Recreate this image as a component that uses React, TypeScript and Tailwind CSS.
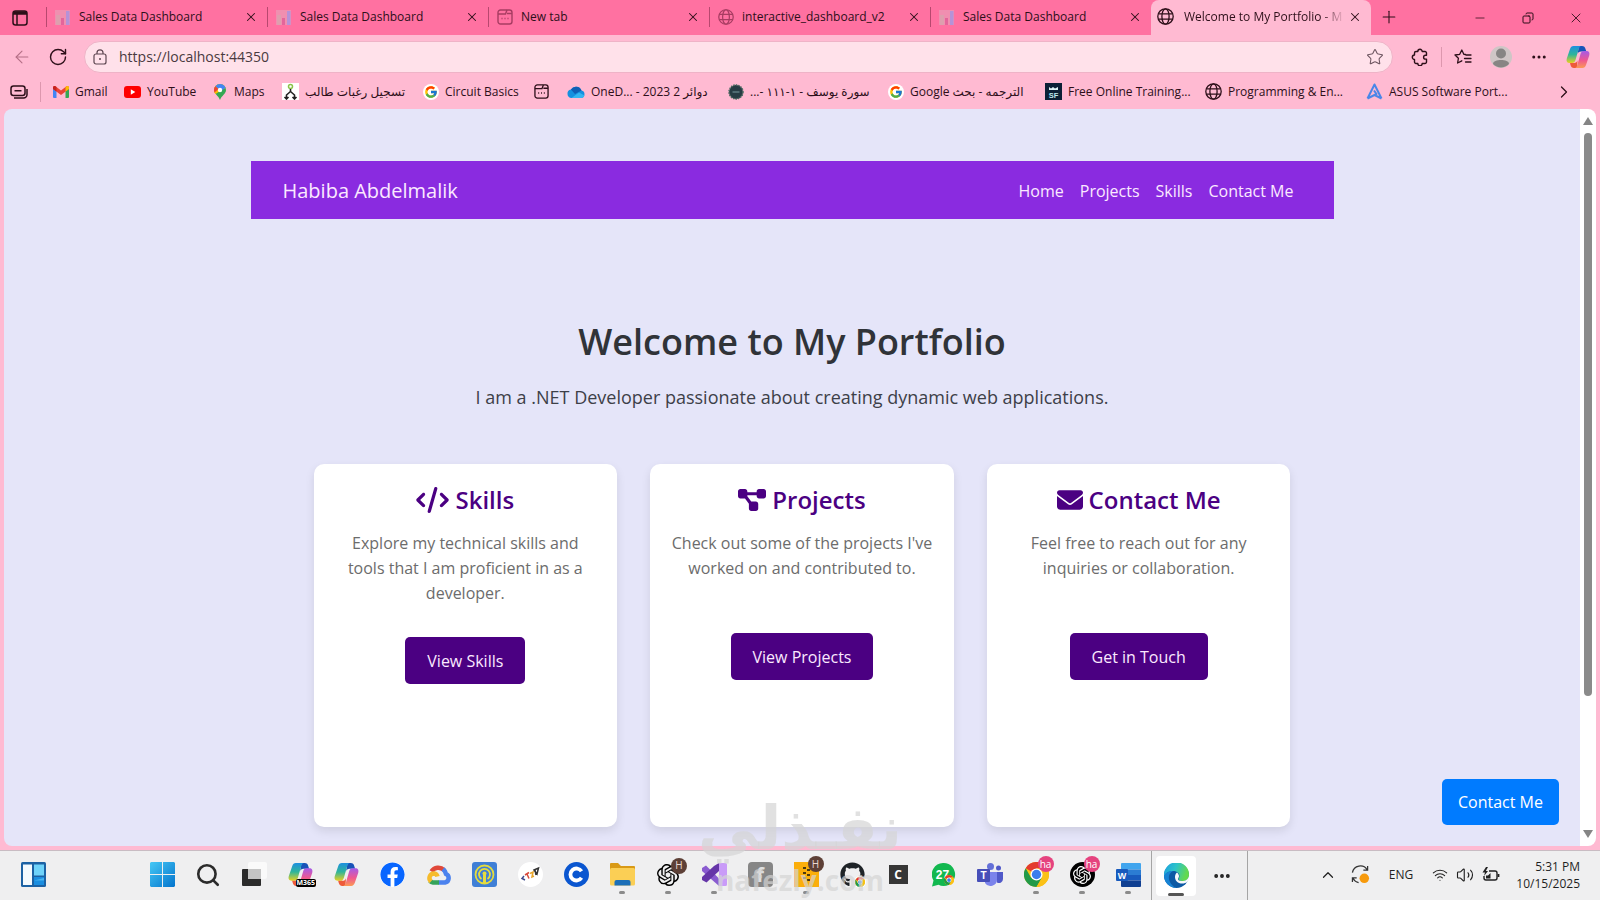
import React from "react";
import { FaFacebook, FaGithub } from "react-icons/fa";
import { FaCode, FaDiagramProject, FaEnvelope } from "react-icons/fa6";
import { FcGoogle } from "react-icons/fc";
import { SiOpenai } from "react-icons/si";
import {
  ArrowLeft,
  ChevronRight,
  ChevronUp,
  Copy,
  Ellipsis,
  Minus,
  Plus,
  RotateCw,
  Search,
  Star,
  Volume2,
  Wifi,
  X,
} from "lucide-react";

type IconProps = { className?: string };

const ChartIcon: React.FC<IconProps> = ({ className }) => (
  <svg viewBox="0 0 16 16" className={className}>
    <rect x="0" y="1" width="15" height="15" fill="#f08fb0" />
    <rect x="1" y="6" width="4" height="10" fill="#dd9fae" />
    <rect x="6" y="9" width="3" height="7" fill="#e4659b" />
    <rect x="11" y="2" width="3.500" height="14" fill="#b592d8" />
  </svg>
);

const GlobeIcon: React.FC<IconProps> = ({ className }) => (
  <svg viewBox="0 0 17 17" fill="none" stroke="currentColor" strokeWidth="1.300" className={className}>
    <circle cx="8.500" cy="8.500" r="7.700" />
    <ellipse cx="8.500" cy="8.500" rx="3.600" ry="7.700" />
    <path d="M1.500 5.800h14M1.500 11.200h14" />
  </svg>
);

const PageIcon: React.FC<IconProps> = ({ className }) => (
  <svg viewBox="0 0 16 16" fill="none" stroke="currentColor" strokeWidth="1.400" className={className}>
    <rect x="1" y="1" width="14" height="14" rx="2.500" />
    <path d="M1 5h7.500l1.500-4M10 4.500h5" />
    <path d="M4.500 9.500h1M7.500 9.500h1M10.500 9.500h1" strokeWidth="1.600" />
  </svg>
);

const PuzzleIcon: React.FC<IconProps> = ({ className }) => (
  <svg viewBox="0 0 18 18" fill="none" stroke="currentColor" strokeWidth="1.400" strokeLinejoin="round" className={className}>
    <path d="M6.800 3.500a2.200 2.200 0 0 1 4.400 0H14a1.500 1.500 0 0 1 1.500 1.500v2.300h-1a1.900 1.900 0 0 0 0 3.800h1V14a1.500 1.500 0 0 1-1.500 1.500h-2.800a2.200 2.200 0 0 1-4.400 0H5A1.500 1.500 0 0 1 3.500 14v-2.600a2.200 2.200 0 0 1 0-4.400V5A1.500 1.500 0 0 1 5 3.500z" />
  </svg>
);

const CopilotIcon: React.FC<IconProps> = ({ className }) => (
  <svg viewBox="0 0 24 24" className={className}>
    <defs>
      <linearGradient id="cpBlue" x1="0" y1="0" x2="0" y2="1">
        <stop offset="0" stopColor="#1d8fe0" />
        <stop offset=".5" stopColor="#2fb59a" />
        <stop offset="1" stopColor="#e8d020" />
      </linearGradient>
      <linearGradient id="cpPink" x1="0" y1="0" x2="0" y2="1">
        <stop offset="0" stopColor="#a55be8" />
        <stop offset=".55" stopColor="#f0588f" />
        <stop offset="1" stopColor="#fb9a55" />
      </linearGradient>
    </defs>
    <path d="M13 1h3c2 0 3 1 3.500 3l.8 2.500H15c-2 0-3 1-3.500 2.500z" fill="#1853b8" />
    <path d="M7.500 1H15c-1.500.5-2 2-2.500 3.500L9.500 15c-.6 2-1.600 3-3.500 3H3.500C1 18 0 16 .8 13.500L4 4c.7-2 1.700-3 3.500-3z" fill="url(#cpBlue)" />
    <path d="M11 23H8c-2 0-3-1-3.500-3L4 18h4c2 0 3-1 3.500-2.500z" fill="#ee5a3a" />
    <path d="M16.500 23H9c1.500-.5 2-2 2.500-3.500L14.500 9c.6-2 1.600-3 3.500-3h2.500c2.500 0 3.500 2 2.700 4.500L20 20c-.7 2-1.700 3-3.500 3z" fill="url(#cpPink)" />
  </svg>
);

const ChromeIcon: React.FC<IconProps> = ({ className }) => (
  <svg viewBox="0 0 24 24" className={className}>
    <circle cx="12" cy="12" r="12" fill="#fbc116" />
    <path d="M12 12L1.600 6A12 12 0 0 1 22.400 6H12z" fill="#e33b2e" />
    <path d="M1.600 6A12 12 0 0 0 12 24l5.200-9L12 12 6.800 15z" fill="#229a48" />
    <path d="M22.400 6A12 12 0 0 1 12 24l5.200-9L16 6z" fill="#fbc116" />
    <circle cx="12" cy="12" r="5.800" fill="#fff" />
    <circle cx="12" cy="12" r="4.500" fill="#3b7ded" />
  </svg>
);

const GmailIcon: React.FC<IconProps> = ({ className }) => (
  <svg viewBox="0 0 16 12" className={className}>
    <path d="M0 1.500V11a1 1 0 0 0 1 1h2.500V4z" fill="#4285f4" />
    <path d="M16 1.500V11a1 1 0 0 1-1 1h-2.500V4z" fill="#34a853" />
    <path d="M0 1.500C0 0 1.800-.5 2.800.4L8 4.500 13.200.4C14.200-.5 16 0 16 1.500V3L8 9 0 3z" fill="#ea4335" />
    <path d="M12.500 1l.7-.6C14.200-.5 16 0 16 1.500V3l-3.500 2.600z" fill="#fbbc04" />
    <path d="M0 1.500C0 0 1.800-.5 2.800.4l.7.6v4.600L0 3z" fill="#c5221f" />
  </svg>
);

const YoutubeIcon: React.FC<IconProps> = ({ className }) => (
  <svg viewBox="0 0 17 12" className={className}>
    <rect width="17" height="12" rx="3" fill="#f00" />
    <path d="M6.800 3.300v5.400L11.300 6z" fill="#fff" />
  </svg>
);

const MapsIcon: React.FC<IconProps> = ({ className }) => (
  <svg viewBox="0 0 12 16" className={className}>
    <path d="M6 0a6 6 0 0 1 6 6c0 4-4.500 5.500-6 10C4.500 11.500 0 10 0 6a6 6 0 0 1 6-6z" fill="#34a853" />
    <path d="M6 0a6 6 0 0 1 5.600 3.800L1.500 10C.6 9 0 7.800 0 6a6 6 0 0 1 6-6z" fill="#fbbc04" />
    <path d="M6 0a6 6 0 0 1 5.600 3.800L7 7 1.400 2.200A6 6 0 0 1 6 0z" fill="#4285f4" />
    <path d="M1.400 2.200L4.500 5 .6 8.500A6 6 0 0 1 1.400 2.200z" fill="#ea4335" />
    <circle cx="6" cy="6" r="2.200" fill="#fff" />
  </svg>
);

const TreeIcon: React.FC<IconProps> = ({ className }) => (
  <svg viewBox="0 0 17 17" className={className}>
    <rect width="17" height="17" fill="#fff" />
    <circle cx="8.500" cy="3.500" r="2" fill="none" stroke="#8bc34a" strokeWidth="1.500" />
    <path d="M8.500 6v3M8.500 8.500L4.500 12v3M8.500 8.500l4 3.500v3M2.500 14l2 2 2-2M10.500 14l2 2 2-2" fill="none" stroke="#222" strokeWidth="1.600" />
  </svg>
);

const GoogleTile: React.FC<IconProps> = ({ className }) => (
  <span className={`flex items-center justify-center rounded-full bg-white ${className}`}>
    <FcGoogle className="size-3.5" />
  </span>
);

const CloudIcon: React.FC<IconProps> = ({ className }) => (
  <svg viewBox="0 0 18 12" className={className}>
    <path d="M4.500 12a4.300 4.300 0 0 1-.6-8.500A6 6 0 0 1 14.500 4.500 3.800 3.800 0 0 1 14 12z" fill="#1490df" />
    <path d="M3.900 3.500A6 6 0 0 1 14.500 4.500L8 8z" fill="#0f5fb5" />
    <path d="M4.500 12L12 6.500l5.500 3A3.500 3.500 0 0 1 14 12z" fill="#33b5f1" />
  </svg>
);

const SealIcon: React.FC<IconProps> = ({ className }) => (
  <svg viewBox="0 0 16 16" className={className}>
    <circle cx="8" cy="8" r="7" fill="#263c44" stroke="#4a6a60" strokeWidth="1.500" strokeDasharray="1.500 1" />
    <path d="M4.500 8h7" stroke="#5d7a80" strokeWidth="1.500" />
  </svg>
);

const SfIcon: React.FC<IconProps> = ({ className }) => (
  <svg viewBox="0 0 17 17" className={className}>
    <rect width="17" height="17" fill="#0c2036" />
    <path d="M4 7V4l2 1.500L8 4l2 1.500L13 4v3z" fill="#dff3f5" />
    <text x="8.500" y="15" fontSize="7.500" fontWeight="700" textAnchor="middle" fill="#bfe9ee" fontFamily="Liberation Sans, sans-serif">SF</text>
  </svg>
);

const AsusIcon: React.FC<IconProps> = ({ className }) => (
  <svg viewBox="0 0 17 17" fill="none" stroke="#4a86e8" strokeWidth="2" strokeLinejoin="round" className={className}>
    <path d="M1.500 15.500L8.500 1.500l7 14M1.500 15.500l9-4.500-2.500-3.500M8.500 12l7 3.500" />
  </svg>
);

const SidebarIcon: React.FC<IconProps> = ({ className }) => (
  <svg viewBox="0 0 18 14" fill="none" stroke="currentColor" strokeWidth="1.500" className={className}>
    <rect x="1" y="1" width="14" height="9.500" rx="2.500" />
    <path d="M4.500 5.800h7M4 13h9.500a3.500 3.500 0 0 0 3.500-3.500V4" />
  </svg>
);

const WorkspaceIcon: React.FC<IconProps> = ({ className }) => (
  <svg viewBox="0 0 16 16" fill="none" stroke="#2d0f19" strokeWidth="1.500" className={className}>
    <rect x="1" y="1" width="14" height="14" rx="2.500" />
    <path d="M1 3h14" strokeWidth="3.500" />
    <path d="M5 4v11" />
  </svg>
);

const LockIcon: React.FC<IconProps> = ({ className }) => (
  <svg viewBox="0 0 14 16" fill="none" stroke="currentColor" strokeWidth="1.200" className={className}>
    <rect x="1" y="5" width="12" height="10" rx="2" />
    <path d="M4 5V3.800a3 3 0 0 1 6 0V5" />
    <circle cx="7" cy="10" r="1" fill="currentColor" stroke="none" />
  </svg>
);

const FavoritesIcon: React.FC<IconProps> = ({ className }) => (
  <svg viewBox="0 0 18 16" fill="none" stroke="currentColor" strokeWidth="1.300" strokeLinejoin="round" strokeLinecap="round" className={className}>
    <path d="M11.500 5.500L9.800 5.300 7.800 1 5.700 5.300 1 6l3.400 3.300L3.600 14l4.200-2.200" />
    <path d="M12 6h5M10.500 9.500H17M11.500 13H17" />
  </svg>
);

const WidgetsIcon: React.FC<IconProps> = ({ className }) => (
  <svg viewBox="0 0 25 25" className={className}>
    <rect width="25" height="25" rx="1.500" fill="#1c62a4" />
    <rect x="2" y="2.500" width="9" height="20.500" fill="#f4fafe" />
    <rect x="13" y="2.500" width="10" height="11" fill="#6fd3fa" />
    <path d="M13 15h10v8H13z" fill="#1b8ee0" />
    <path d="M13 18.500L23 16v2.500z" fill="#45b4f2" />
  </svg>
);

const WindowsIcon: React.FC<IconProps> = ({ className }) => (
  <svg viewBox="0 0 25 25" className={className}>
    <defs>
      <linearGradient id="win" x1="0" y1="0" x2="1" y2="1">
        <stop offset="0" stopColor="#45c8f5" />
        <stop offset="1" stopColor="#0474cd" />
      </linearGradient>
    </defs>
    <path d="M1 0h11v12H0V1zM13 0h11l1 1v11H13zM0 13h12v12H1l-1-1zM13 13h12v11l-1 1H13z" fill="url(#win)" />
  </svg>
);

const TaskViewIcon: React.FC<IconProps> = ({ className }) => (
  <svg viewBox="0 0 26 25" className={className}>
    <rect x="7" y="0" width="19" height="17" rx="2" fill="#fafafa" />
    <rect x="1" y="7" width="19" height="17" rx="1" fill="#2b2b2b" />
    <rect x="7" y="7" width="13" height="10" fill="#c4c4c4" />
  </svg>
);

const GoogleCloudIcon: React.FC<IconProps> = ({ className }) => (
  <svg viewBox="0 0 25 21" fill="none" strokeWidth="4.500" className={className}>
    <path d="M5.500 7.500A8 8 0 0 1 18 6" stroke="#e0483a" />
    <path d="M17 5a9 9 0 0 1 3 5 4.500 4.500 0 0 1-1 8.500h-6.500" stroke="#4b82ee" />
    <path d="M13 18.500H7a4.500 4.500 0 0 1-3-1.500" stroke="#35a35a" />
    <path d="M5 17.500A4.600 4.600 0 0 1 7.500 9.500c2 0 3.500 1 4 3" stroke="#f6bb2c" />
  </svg>
);

const PodcastIcon: React.FC<IconProps> = ({ className }) => (
  <svg viewBox="0 0 25 25" fill="none" stroke="#e4dc3f" strokeWidth="1.800" className={className}>
    <rect width="25" height="25" rx="3" fill="#3f7fd6" stroke="none" />
    <circle cx="12.500" cy="12.500" r="9" />
    <path d="M9.500 17a5.500 5.500 0 1 1 6 0" />
    <path d="M12.500 12v9" strokeWidth="3" />
    <circle cx="12.500" cy="11.500" r="2" fill="#e4dc3f" stroke="none" />
  </svg>
);

const TopIcon: React.FC<IconProps> = ({ className }) => (
  <svg viewBox="0 0 25 25" fill="none" strokeWidth="1.500" className={className}>
    <circle cx="12.500" cy="12.500" r="12.500" fill="#fff" />
    <path d="M6 14l-2 2.500 3 1.500" stroke="#3e4a8c" />
    <path d="M7 13l4-2.500M9 12l2 4.500" stroke="#d84a3c" />
    <path d="M12 11.500l3-1.500-1 5 2-1" stroke="#e8a52c" />
    <path d="M16 8l4.500-2-1.500 6zM17 8l1 5" stroke="#333" />
  </svg>
);

const CourseraIcon: React.FC<IconProps> = ({ className }) => (
  <svg viewBox="0 0 25 25" className={className}>
    <circle cx="12.500" cy="12.500" r="12.500" fill="#0a56d0" />
    <path d="M17.500 9.300a6 6 0 1 0 0 6.400" fill="none" stroke="#fff" strokeWidth="3.800" />
  </svg>
);

const FolderIcon: React.FC<IconProps> = ({ className }) => (
  <svg viewBox="0 0 25 23" className={className}>
    <path d="M0 1a1 1 0 0 1 1-1h7l3 3h13a1 1 0 0 1 1 1v8H0z" fill="#d99a16" />
    <rect y="5" width="25" height="17.500" rx="1.500" fill="#fbcf55" />
    <path d="M4.500 22.500V19a2 2 0 0 1 2-2h12a2 2 0 0 1 2 2v3.500z" fill="#1c6fb8" />
  </svg>
);

const VisualStudioIcon: React.FC<IconProps> = ({ className }) => (
  <svg viewBox="0 0 25 25" className={className}>
    <path d="M17 1h6.500a1.500 1.500 0 0 1 1.500 1.500v20a1.500 1.500 0 0 1-1.500 1.500H17z" fill="#c99bf8" />
    <path d="M0 6l4-2.500 13 13V24L0 9z" fill="#8a5bd0" />
    <path d="M17 1v8L4.500 20.500 0 18v-3L12 4z" fill="#6535a8" />
  </svg>
);

const ArchiveIcon: React.FC<IconProps> = ({ className }) => (
  <svg viewBox="0 0 25 25" className={className}>
    <rect width="25" height="25" fill="#fbae0b" />
    <path d="M9 6h3M13 8h3M9 11h3M13 13h3M9 16h3M13 18h3" stroke="#4a3a12" strokeWidth="2" />
  </svg>
);

const WhatsappIcon: React.FC<IconProps> = ({ className }) => (
  <svg viewBox="0 0 24 24" className={className}>
    <path d="M11.500 0a11.500 11.500 0 1 1-5 21.800L0 23.500l1.500-6A11.500 11.500 0 0 1 11.500 0z" fill="#12b84f" />
    <text x="10.500" y="16" fontSize="12" fontWeight="700" textAnchor="middle" fill="#fff" fontFamily="Liberation Sans, sans-serif">27</text>
  </svg>
);

const TeamsIcon: React.FC<IconProps> = ({ className }) => (
  <svg viewBox="0 0 26 24" className={className}>
    <circle cx="13.500" cy="3.500" r="3.500" fill="#6470d8" />
    <circle cx="21.500" cy="5" r="2.500" fill="#5059c9" />
    <path d="M18 9h8v7a4 4 0 0 1-6 3.500z" fill="#5059c9" />
    <path d="M8 9h12v7.500a6.500 6.500 0 0 1-12 3.500z" fill="#7b83eb" />
    <rect y="6" width="13" height="13" rx="1" fill="#464eb8" />
    <text x="6.500" y="16" fontSize="10" fontWeight="700" textAnchor="middle" fill="#fff" fontFamily="Liberation Sans, sans-serif">T</text>
  </svg>
);

const WordIcon: React.FC<IconProps> = ({ className }) => (
  <svg viewBox="0 0 25 24" className={className}>
    <path d="M5 1a1 1 0 0 1 1-1h18a1 1 0 0 1 1 1v5.500H5z" fill="#41a5ee" />
    <path d="M5 6.500h20V12H5z" fill="#2b7cd3" />
    <path d="M5 12h20v5.500H5z" fill="#185abd" />
    <path d="M5 17.500h20V23a1 1 0 0 1-1 1H6a1 1 0 0 1-1-1z" fill="#103f91" />
    <rect y="6" width="12" height="12" rx="1" fill="#185abd" />
    <text x="6" y="15.500" fontSize="9" fontWeight="700" textAnchor="middle" fill="#fff" fontFamily="Liberation Sans, sans-serif">W</text>
  </svg>
);

const EdgeIcon: React.FC<IconProps> = ({ className }) => (
  <svg viewBox="0 0 25 25" className={className}>
    <defs>
      <linearGradient id="edgeTop" x1="0" y1="0" x2="1" y2="0.300">
        <stop offset="0" stopColor="#1b9de2" />
        <stop offset=".5" stopColor="#2dc3c9" />
        <stop offset="1" stopColor="#63d94d" />
      </linearGradient>
    </defs>
    <circle cx="12.500" cy="12.500" r="12.500" fill="#0c59a4" />
    <path d="M0 11.500A12.500 12.500 0 0 1 25 12c0 4-3 6-6.500 6-2.500 0-4-.8-4-2 0-.8 1-1.200 1-3C15.500 10.500 13 8 9.500 8 5 8 1 10 0 14z" fill="url(#edgeTop)" />
    <path d="M0 13C1 10 5 8 9 8c-4 2-5 6-3.500 10 1 3 4 6 7 7A12.500 12.500 0 0 1 0 13z" fill="#1783d4" />
    <path d="M12 10.500c-2 3-1 8 3 9.500 3 1.200 6.500.5 8.800-1.500l1.200-1V13c-1 4-4 5-7 5s-4-.8-4-2c0-.8 1-1.200 1-3 0-1-.8-2.500-2-3.500z" fill="#f7f9fa" />
  </svg>
);

const SyncIcon: React.FC<IconProps> = ({ className }) => (
  <svg viewBox="0 0 20 20" fill="none" stroke="#333" strokeWidth="1.300" className={className}>
    <path d="M1.500 8A8.500 8.500 0 0 1 17 5M17.500 1v4.500H13M6 13.500H1.500V18M2 14a8.500 8.500 0 0 0 6 4.500" />
    <circle cx="14" cy="14" r="5" fill="#f79a0c" stroke="none" />
  </svg>
);

const BatteryIcon: React.FC<IconProps> = ({ className }) => (
  <svg viewBox="0 0 18 16" fill="none" stroke="#222" strokeWidth="1.400" className={className}>
    <path d="M7 4h6a2 2 0 0 1 2 2v5a2 2 0 0 1-2 2H4a2 2 0 0 1-2-2V9" />
    <path d="M16.500 7v3" strokeWidth="1.800" />
    <path d="M4 8.500h2L8.500 6v5.500H4z" fill="#222" stroke="none" />
    <path d="M4 0L.5 5.500H3L2 9l4-5H3.800L6 0z" fill="#222" stroke="none" />
  </svg>
);

const LetterTile: React.FC<{ letter: string; className: string }> = ({ letter, className }) => (
  <span className={`flex items-center justify-center font-bold ${className}`}>{letter}</span>
);

const tabs = [
  { title: "Sales Data Dashboard", icon: ChartIcon },
  { title: "Sales Data Dashboard", icon: ChartIcon },
  { title: "New tab", icon: PageIcon },
  { title: "interactive_dashboard_v2", icon: GlobeIcon },
  { title: "Sales Data Dashboard", icon: ChartIcon },
];

const TabStrip: React.FC = () => (
  <div className="flex h-[35px] items-stretch bg-[#ff71a1]">
    <button aria-label="Workspaces" className="flex w-[46px] shrink-0 items-center pl-3">
      <WorkspaceIcon className="size-4" />
    </button>
    {tabs.map(({ title, icon: Icon }, i) => (
      <div key={i} className="flex w-[221px] items-center pb-0.5">
        <span className="h-5 w-px shrink-0 bg-[#b8486f]" />
        <Icon className="ml-2 size-4 shrink-0 text-[#a83c62]" />
        <span className="ml-2 flex-1 truncate text-xs">{title}</span>
        <button aria-label="Close tab" className="mr-1.5 flex size-5 shrink-0 items-center justify-center">
          <X className="size-3.5" strokeWidth={1.8} />
        </button>
      </div>
    ))}
    <div className="flex w-[220px] items-center rounded-t-lg bg-[#ffbad2] pb-0.5">
      <GlobeIcon className="ml-1.5 size-[17px] shrink-0" />
      <span className="ml-2.5 flex-1 overflow-hidden bg-linear-to-r from-[#2d0f19] from-85% to-transparent bg-clip-text text-xs whitespace-nowrap text-transparent">
        Welcome to My Portfolio - M
      </span>
      <button aria-label="Close tab" className="mr-1.5 flex size-5 shrink-0 items-center justify-center">
        <X className="size-3.5" strokeWidth={1.8} />
      </button>
    </div>
    <button aria-label="New tab" className="flex w-9 items-center justify-center pb-0.5">
      <Plus className="size-5" strokeWidth={1.3} />
    </button>
    <div className="ml-auto flex">
      <button aria-label="Minimize" className="flex w-12 items-center justify-center">
        <Minus className="size-3.5" strokeWidth={1.3} />
      </button>
      <button aria-label="Restore" className="flex w-12 items-center justify-center">
        <Copy className="size-3 -scale-x-100" strokeWidth={2} />
      </button>
      <button aria-label="Close" className="flex w-12 items-center justify-center">
        <X className="size-4" strokeWidth={1.3} />
      </button>
    </div>
  </div>
);

const AddressBar: React.FC = () => (
  <div className="flex h-[43px] items-center">
    <button aria-label="Back" className="ml-3 text-[#b56f86]">
      <ArrowLeft className="size-5" strokeWidth={1.3} />
    </button>
    <button aria-label="Reload" className="mx-4">
      <RotateCw className="size-5" strokeWidth={1.7} />
    </button>
    <label className="flex h-8 flex-1 items-center rounded-full border border-[#efb3c7] bg-[#ffe1ea] px-2">
      <LockIcon className="h-4 w-3.5 text-[#5d4650]" />
      <input
        type="text"
        aria-label="Address"
        defaultValue="https://localhost:44350"
        className="ml-3 flex-1 bg-transparent text-sm text-[#4a3a40] outline-none"
      />
      <Star className="size-[18px] text-[#6d5560]" strokeWidth={1.4} />
    </label>
    <button aria-label="Extensions" className="ml-[18px]">
      <PuzzleIcon className="size-[18px]" />
    </button>
    <span className="mx-3 h-5 w-px bg-[#dd97ae]" />
    <button aria-label="Favorites">
      <FavoritesIcon className="h-4 w-[18px]" />
    </button>
    <button aria-label="Profile" className="ml-[18px]">
      <svg viewBox="0 0 22 22" className="size-[22px]">
        <circle cx="11" cy="11" r="11" fill="#cfc6c6" />
        <circle cx="11" cy="7.500" r="5" fill="#878584" />
        <path d="M3 18c0-3 4-4 8-4s8 1 8 4a11 11 0 0 1-16 0z" fill="#878584" />
      </svg>
    </button>
    <button aria-label="Settings and more" className="mx-[18px]">
      <Ellipsis className="size-[18px]" />
    </button>
    <button aria-label="Copilot" className="mr-2.5">
      <CopilotIcon className="size-6" />
    </button>
  </div>
);

const bookmarks = [
  { label: "Gmail", icon: GmailIcon, size: "w-4 h-3", width: "w-[71px]" },
  { label: "YouTube", icon: YoutubeIcon, size: "w-[17px] h-3", width: "w-[88px]" },
  { label: "Maps", icon: MapsIcon, size: "w-4 h-4", width: "w-[70px]" },
  { label: "تسجيل رغبات طالب", icon: TreeIcon, size: "size-[17px]", width: "w-[141px]" },
  { label: "Circuit Basics", icon: GoogleTile, size: "size-4", width: "w-[111px]" },
  { label: "", icon: PageIcon, size: "size-[15px]", width: "w-[33px]" },
  { label: "OneD... - 2023 2 دوائر", icon: CloudIcon, size: "w-[18px] h-3", width: "w-[161px]" },
  { label: "سورة يوسف - ١-١١١ -...", icon: SealIcon, size: "size-4", width: "w-[160px]" },
  { label: "الترجمه - بحث Google", icon: GoogleTile, size: "size-4", width: "w-[157px]" },
  { label: "Free Online Training...", icon: SfIcon, size: "size-[17px]", width: "w-[160px]" },
  { label: "Programming & En...", icon: GlobeIcon, size: "size-[17px]", width: "w-[161px]" },
  { label: "ASUS Software Port...", icon: AsusIcon, size: "size-[17px]", width: "w-[150px]" },
];

const Bookmarks: React.FC = () => (
  <nav className="flex h-[31px] items-center pb-1">
    <button aria-label="Collections" className="ml-2.5">
      <SidebarIcon className="h-3.5 w-[18px]" />
    </button>
    <span className="mx-3 h-5 w-px shrink-0 bg-[#dd97ae]" />
    {bookmarks.map(({ label, icon: Icon, size, width }, i) => (
      <a key={i} href="#" aria-label={label || "Page"} className={`flex shrink-0 items-center ${width}`}>
        <Icon className={`shrink-0 ${size}`} />
        <span dir="auto" className="ml-1.5 text-xs whitespace-nowrap">
          {label}
        </span>
      </a>
    ))}
    <button aria-label="More bookmarks" className="mr-[26px] ml-auto">
      <ChevronRight className="size-5" strokeWidth={1.5} />
    </button>
  </nav>
);

const cards = [
  {
    title: "Skills",
    icon: FaCode,
    iconSize: "h-[26px] w-[33px]",
    text: "Explore my technical skills and tools that I am proficient in as a developer.",
    action: "View Skills",
    spacing: "mt-[31px]",
  },
  {
    title: "Projects",
    icon: FaDiagramProject,
    iconSize: "h-[26px] w-7",
    text: "Check out some of the projects I've worked on and contributed to.",
    action: "View Projects",
    spacing: "mt-[52px]",
  },
  {
    title: "Contact Me",
    icon: FaEnvelope,
    iconSize: "size-[26px]",
    text: "Feel free to reach out for any inquiries or collaboration.",
    action: "Get in Touch",
    spacing: "mt-[52px]",
  },
];

const Portfolio: React.FC = () => (
  <main className="min-w-0 flex-1 overflow-hidden bg-[#e5e5f9]">
    <div className="mx-auto mt-[52px] max-w-[1083px]">
      <header className="flex h-[58px] items-center justify-between bg-[#8a2be0] pt-0.5 pr-10 pl-8 text-[#fbe9ff]">
        <a href="#" className="text-xl">
          Habiba Abdelmalik
        </a>
        <nav className="flex gap-4 text-base">
          <a href="#">Home</a>
          <a href="#">Projects</a>
          <a href="#">Skills</a>
          <a href="#">Contact Me</a>
        </nav>
      </header>
      <h1 className="mt-[98px] text-center text-4xl leading-[50px] font-semibold text-[#303338]">
        Welcome to My Portfolio
      </h1>
      <p className="mt-4 text-center text-lg leading-7 text-[#3d4048]">
        I am a .NET Developer passionate about creating dynamic web applications.
      </p>
      <section className="mt-[53px] mr-[43px] ml-[63px] grid grid-cols-3 gap-[33px]">
        {cards.map(({ title, icon: Icon, iconSize, text, action, spacing }) => (
          <article
            key={title}
            className="flex h-[363px] flex-col items-center rounded-[10px] bg-white px-5 pt-5 text-center shadow-[0_4px_10px_rgba(0,0,0,0.1)]"
          >
            <h2 className="flex items-center gap-1.5 text-2xl leading-8 font-semibold text-[#4b0082]">
              <Icon className={iconSize} />
              {title}
            </h2>
            <p className="mt-[15px] text-base leading-[25px] text-[#6c6c6c]">{text}</p>
            <button className={`h-[47px] rounded-[5px] bg-[#4b0082] px-[22px] text-base text-[#fbe9ff] ${spacing}`}>
              {action}
            </button>
          </article>
        ))}
      </section>
    </div>
  </main>
);

const Scrollbar: React.FC = () => (
  <div className="flex w-4 shrink-0 flex-col items-center justify-between bg-white py-2">
    <svg viewBox="0 0 10 8" className="h-2 w-2.5">
      <path d="M5 0l5 8H0z" fill="#858585" />
    </svg>
    <span className="mt-2 h-[563px] w-2 rounded-full bg-[#8a8a8a]" />
    <span className="flex-1" />
    <svg viewBox="0 0 10 8" className="h-2 w-2.5">
      <path d="M5 8l5-8H0z" fill="#858585" />
    </svg>
  </div>
);

const Badge: React.FC<{ text: string; className: string }> = ({ text, className }) => (
  <span
    className={`absolute -top-1.5 left-3.5 flex size-4 items-center justify-center rounded-full text-[10px] ${className}`}
  >
    {text}
  </span>
);

const apps = [
  { name: "Start", open: false, icon: <WindowsIcon className="size-[25px]" /> },
  { name: "Search", open: false, icon: <Search className="size-[26px] text-[#2b2b2b]" strokeWidth={2.4} /> },
  { name: "Task view", open: false, icon: <TaskViewIcon className="h-[25px] w-[26px]" /> },
  {
    name: "Microsoft 365",
    open: false,
    icon: (
      <>
        <CopilotIcon className="size-[25px]" />
        <span className="absolute bottom-0 left-2 rounded-xs bg-black px-px text-[7px] leading-2 font-bold text-white">
          M365
        </span>
      </>
    ),
  },
  { name: "Copilot", open: false, icon: <CopilotIcon className="size-[25px]" /> },
  { name: "Facebook", open: false, icon: <FaFacebook className="size-[25px] rounded-full bg-white text-[#0866ff]" /> },
  { name: "Google Cloud", open: false, icon: <GoogleCloudIcon className="h-[21px] w-[25px]" /> },
  { name: "Podcasts", open: false, icon: <PodcastIcon className="size-[25px]" /> },
  { name: "Top", open: false, icon: <TopIcon className="size-[25px]" /> },
  { name: "Coursera", open: false, icon: <CourseraIcon className="size-[25px]" /> },
  { name: "File Explorer", open: true, icon: <FolderIcon className="h-[23px] w-[25px]" /> },
  {
    name: "ChatGPT",
    open: true,
    icon: (
      <>
        <SiOpenai className="size-[22px] text-black" />
        <Badge text="H" className="bg-[#5d4037] text-[#e8d8d2]" />
      </>
    ),
  },
  { name: "Visual Studio", open: true, icon: <VisualStudioIcon className="size-[25px]" /> },
  { name: "Feed", open: false, icon: <LetterTile letter="f" className="size-[25px] rounded bg-[#868686] text-xl text-[#dedede]" /> },
  {
    name: "Archive",
    open: true,
    icon: (
      <>
        <ArchiveIcon className="size-[25px]" />
        <Badge text="H" className="bg-[#5d4037] text-[#e8d8d2]" />
      </>
    ),
  },
  {
    name: "GitHub",
    open: false,
    icon: (
      <>
        <FaGithub className="size-[25px] text-[#1e2327]" />
        <span className="absolute top-3.5 left-3.5 rounded-full bg-white p-px">
          <ChromeIcon className="size-2.5" />
        </span>
      </>
    ),
  },
  { name: "Console", open: false, icon: <LetterTile letter="C" className="size-[19px] bg-[#363636] text-xs text-white" /> },
  {
    name: "WhatsApp",
    open: false,
    icon: (
      <>
        <WhatsappIcon className="size-6" />
        <ChromeIcon className="absolute top-3 left-3 size-2.5" />
      </>
    ),
  },
  { name: "Teams", open: false, icon: <TeamsIcon className="h-6 w-[26px]" /> },
  {
    name: "Chrome",
    open: true,
    icon: (
      <>
        <ChromeIcon className="size-[25px]" />
        <Badge text="ha" className="bg-[#e5437f] text-white" />
      </>
    ),
  },
  {
    name: "ChatGPT app",
    open: true,
    icon: (
      <>
        <span className="flex size-[25px] items-center justify-center rounded-full bg-black">
          <SiOpenai className="size-[18px] text-white" />
        </span>
        <Badge text="ha" className="bg-[#e5437f] text-white" />
      </>
    ),
  },
  { name: "Word", open: true, icon: <WordIcon className="h-6 w-[25px]" /> },
];

const Taskbar: React.FC = () => (
  <footer className="flex h-[50px] items-center border-t border-[#c9bcc3] bg-[#efeff0] text-[#1f1f1f]">
    <button aria-label="Widgets" className="ml-[21px] pb-0.5">
      <WidgetsIcon className="size-[25px]" />
    </button>
    <div className="ml-[93px] flex">
      {apps.map(({ name, open, icon }) => (
        <button key={name} aria-label={name} className="relative flex h-[49px] w-[46px] items-center justify-center pb-0.5">
          <span className="relative">{icon}</span>
          {open && <span className="absolute bottom-1.5 h-[3px] w-1.5 rounded-full bg-[#8b8b8b]" />}
        </button>
      ))}
    </div>
    <div className="flex h-full w-[97px] items-center border-x border-[#a5a5a5] pl-1">
      <button aria-label="Edge" className="relative flex size-10 items-center justify-center rounded-sm bg-white">
        <EdgeIcon className="size-[25px]" />
        <span className="absolute bottom-0 h-[3px] w-4 rounded-full bg-[#555]" />
      </button>
      <button aria-label="More apps" className="ml-4">
        <Ellipsis className="size-5" strokeWidth={2.6} />
      </button>
    </div>
    <div className="mr-5 ml-auto flex items-center pb-0.5 text-xs">
      <ChevronUp className="size-[18px]" strokeWidth={1.6} />
      <SyncIcon className="ml-3.5 size-[19px]" />
      <span className="mx-[19px]">ENG</span>
      <Wifi className="size-4" strokeWidth={1.6} />
      <Volume2 className="mx-2 size-[18px]" strokeWidth={1.5} />
      <BatteryIcon className="h-4 w-[18px]" />
      <p className="ml-4 text-right leading-[17px]">
        5:31 PM
        <br />
        10/15/2025
      </p>
    </div>
  </footer>
);

const App: React.FC = () => {
  return (
    <div className="relative flex h-screen flex-col overflow-hidden bg-[#ffbad2] font-['Open_Sans','DejaVu_Sans',sans-serif] text-[#2d0f19]">
      <TabStrip />
      <AddressBar />
      <Bookmarks />
      <div className="relative mx-1 mb-1 flex min-h-0 flex-1 overflow-hidden rounded-lg">
        <Portfolio />
        <Scrollbar />
        <button className="absolute right-[37px] bottom-[21px] h-[46px] rounded-[5px] bg-[#007bff] px-4 text-base text-white">
          Contact Me
        </button>
      </div>
      <Taskbar />
      <div className="pointer-events-none absolute bottom-0 left-1/2 flex -translate-x-1/2 flex-col items-center font-bold text-[#d4d4d4]/70">
        <span dir="rtl" className="font-['DejaVu_Sans',sans-serif] text-[60px] leading-[64px]">
          نفـذلي
        </span>
        <span className="text-[28px] leading-10">nafezly.com</span>
      </div>
    </div>
  );
};

export default App;
